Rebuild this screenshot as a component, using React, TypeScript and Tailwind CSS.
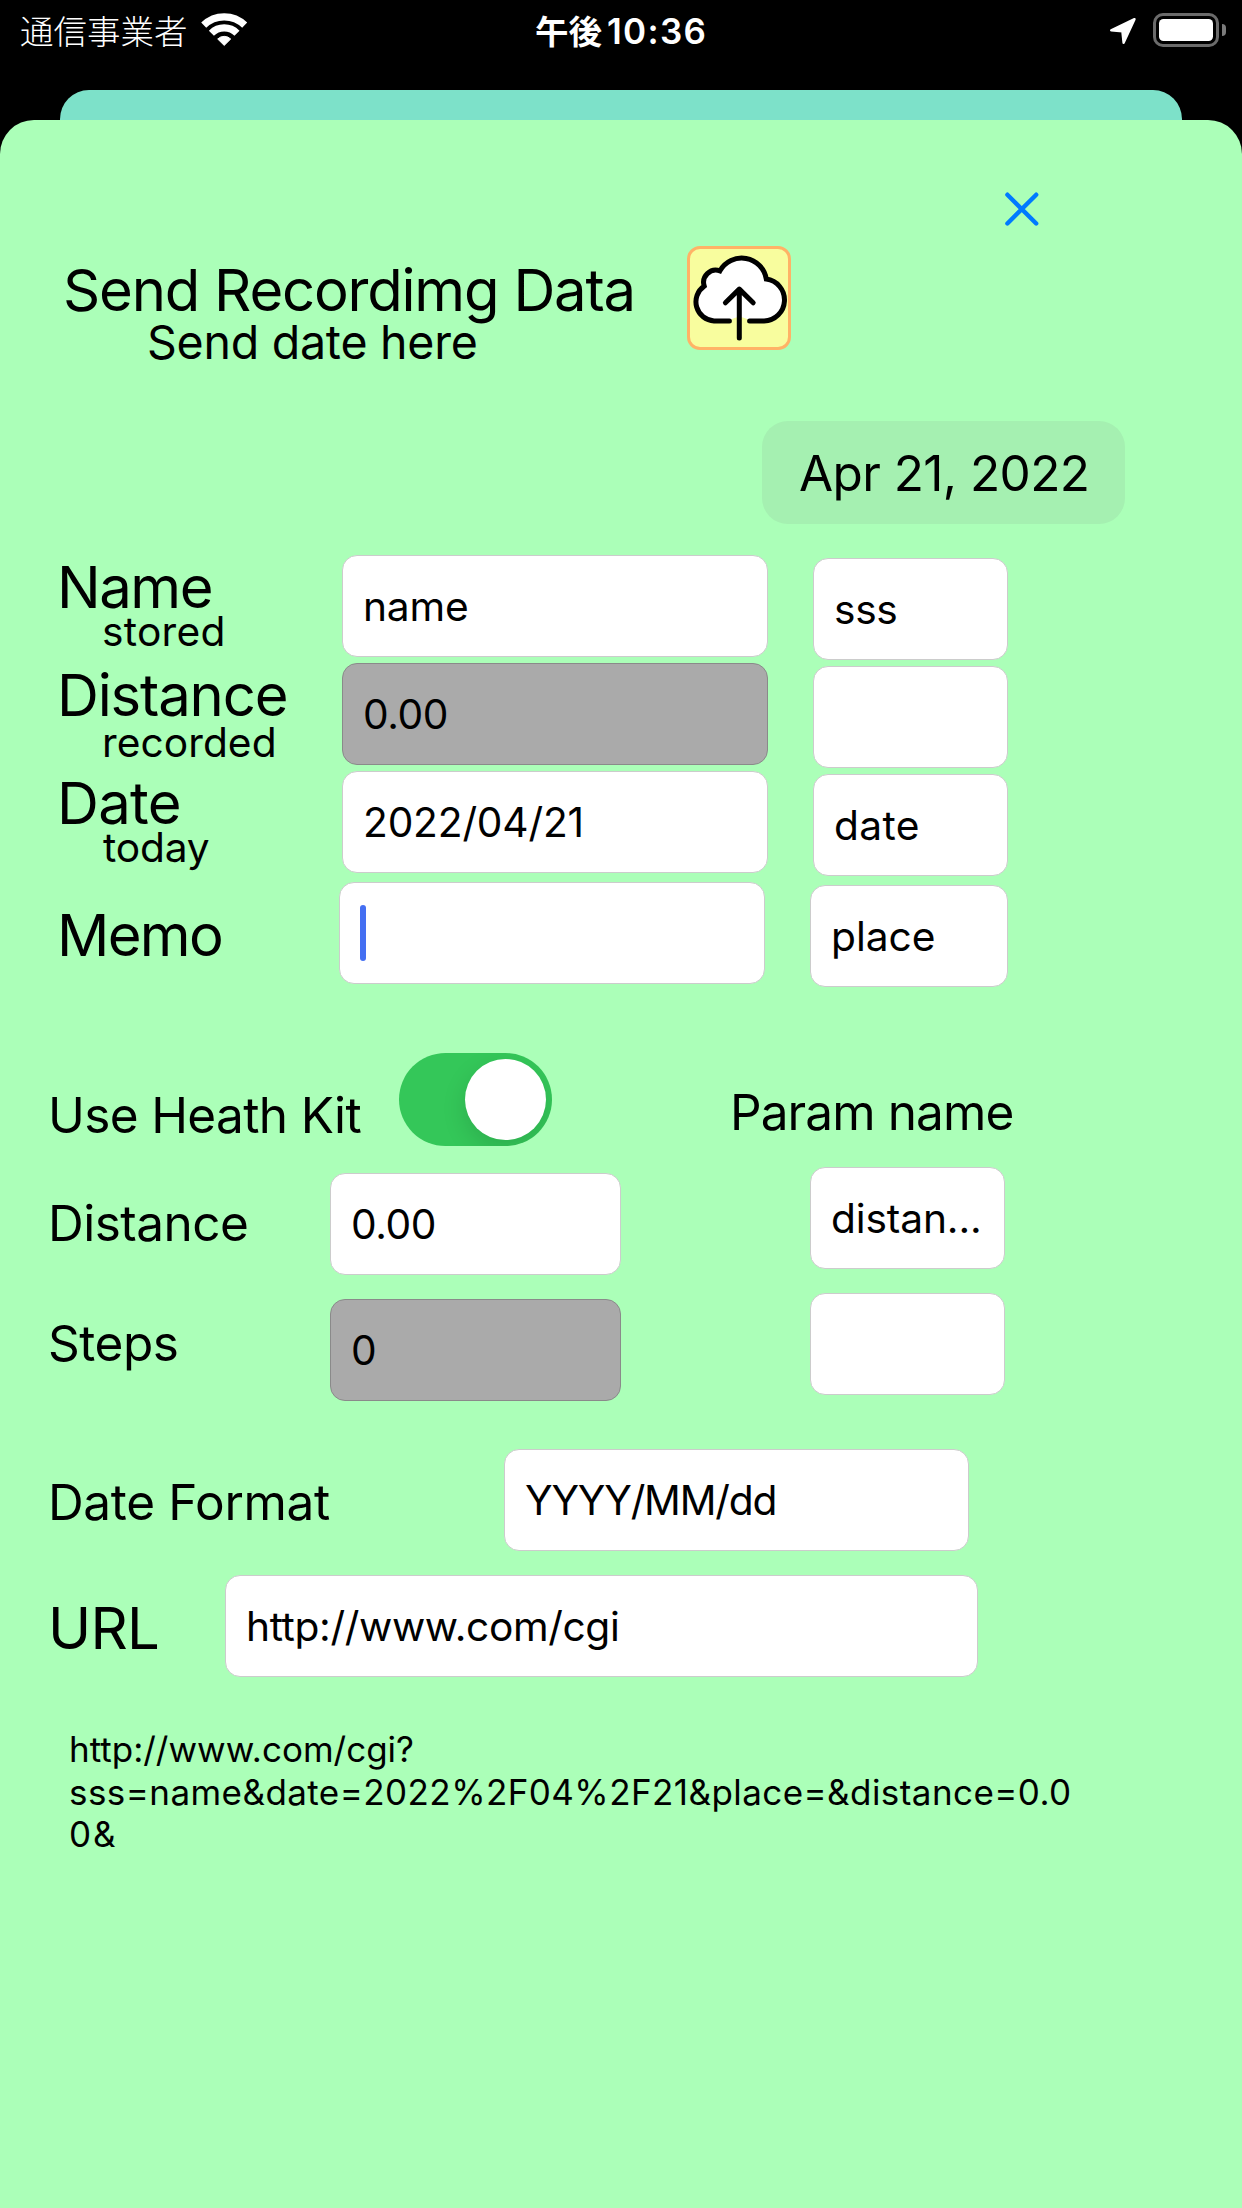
import type { ReactNode } from 'react';

function Field({ children, className = '', muted = false }: { children?: ReactNode; className?: string; muted?: boolean }) {
  return (
    <div
      className={`flex h-[102px] shrink-0 items-center whitespace-pre rounded-[15px] border pl-5 pt-0.5 text-[40.7px] leading-[50px] ${
        muted ? 'border-[#8a8a8a] bg-[#aaaaaa]' : 'border-[#cccccc] bg-white'
      } ${className}`}
    >
      {children}
    </div>
  );
}

function StatusBar() {
  return (
    <header className="flex h-[90px] items-start text-white">
      <div className="ml-5 mt-1.5 w-[181px] whitespace-nowrap font-['Noto_Sans_CJK_JP',sans-serif] text-[33.5px] font-light leading-[48px]">
        通信事業者
      </div>
      <svg className="mt-3 h-[35px] w-[47px]" viewBox="0 0 47 35" fill="none">
        <path d="M2.7 13.2A29.4 29.4 0 0 1 43.7 13.2" stroke="white" strokeWidth="7.2" />
        <path d="M10.4 21.2A18.2 18.2 0 0 1 36 21.2" stroke="white" strokeWidth="7.2" />
        <path d="M23.2 33.4L16.7 27A9.3 9.3 0 0 1 29.7 27Z" fill="white" stroke="white" strokeWidth="1" strokeLinejoin="round" />
      </svg>
      <div className="ml-[287px] flex w-[574px] whitespace-nowrap leading-[48px]">
        <span className="mt-1.5 w-[72px] font-['Noto_Sans_CJK_JP',sans-serif] text-[33.5px] font-bold">午後</span>
        <span className="mt-[7px] font-['Inter',sans-serif] text-[35px] font-semibold tracking-[1.3px]">10:36</span>
      </div>
      <svg className="mt-[17px] h-7 w-7" viewBox="0 0 28 28">
        <path d="M25.5 2.2L2.2 13.3L13.4 14.4L14.6 25.8Z" fill="white" stroke="white" strokeWidth="2.4" strokeLinejoin="round" />
      </svg>
      <div className="ml-4 mt-[13px] flex items-center">
        <div className="h-[34px] w-[66px] rounded-[10px] border-[3px] border-[#6b6b6b] p-[3px]">
          <div className="h-full w-full rounded-[4.5px] bg-white" />
        </div>
        <div className="ml-[3px] h-3 w-1 rounded-r-full bg-[#7b7b7b]" />
      </div>
    </header>
  );
}

function CloudUploadButton() {
  return (
    <button className="-ml-px mt-[19px] h-[104px] w-[104px] rounded-[13px] border-[3px] border-[#ffb366] bg-[#f8fd9e]">
      <svg className="-m-[3px] h-[104px] w-[104px]" viewBox="27.4 16.8 104 104" fill="none" stroke="black" strokeWidth="5" strokeLinecap="round">
        <path
          d="M70 91.5H54.5A19 19 0 0 1 44.6 56.8A12.2 12.2 0 0 1 60.3 41.7A24.9 24.9 0 0 1 106.7 49.9A21 21 0 0 1 104.5 91.5H90Q79.7 84 70 91.5Z"
          fill="white"
          stroke="none"
        />
        <path d="M69.8 91.7H54.5A19.1 19.1 0 0 1 44.6 56.9A12.2 12.2 0 0 1 60.3 41.7A24.9 24.9 0 0 1 106.7 49.9A21 21 0 0 1 104.5 91.7H90" />
        <path d="M79.7 60.3V108.8M65.8 73.6L79.7 59.9L93.6 73.6" strokeLinejoin="round" />
      </svg>
    </button>
  );
}

export default function App() {
  return (
    <div className="h-[2208px] w-[1242px] overflow-hidden bg-black font-['Inter',sans-serif] text-black">
      <StatusBar />
      <div className="mx-[60px] h-[30px] rounded-t-[29px] bg-[#7de1c9]" />
      <main className="h-[2088px] rounded-t-[34px] bg-[#abffb8] pt-[71px]">
        <button className="ml-[1004px] block h-9 w-9">
          <svg className="h-9 w-9" viewBox="0 0 36 36" stroke="#007aff" strokeWidth="4.4" strokeLinecap="round">
            <path d="M3.4 3.7L32.2 32.5M32.2 3.7L3.4 32.5" />
          </svg>
        </button>

        <section className="flex h-[137px] items-start pl-[63px]">
          <div className="w-[625px] whitespace-nowrap pt-[33px]">
            <h1 className="text-[58px] leading-[60px] tracking-[-1.2px]">Send Recordimg Data</h1>
            <p className="pl-[84px] text-[46.5px] leading-[44px] tracking-[-0.24px]">Send date here</p>
          </div>
          <CloudUploadButton />
        </section>

        <button className="ml-[762px] mt-[57px] flex h-[103px] w-[363px] items-center whitespace-nowrap rounded-[26px] bg-[#a5f0b1] pl-[37px] text-[49.5px] leading-[60px] tracking-[-0.58px]">
          Apr 21, 2022
        </button>

        <section className="mt-[31px] flex items-start whitespace-nowrap pl-[57px]">
          <div className="w-[285px] pt-[7px]">
            <h2 className="text-[58px] leading-[50px] tracking-[-1.46px]">Name</h2>
            <p className="pl-[45px] text-[40.7px] leading-[40px] tracking-[0.25px]">stored</p>
            <h2 className="mt-[18px] text-[58px] leading-[50px] tracking-[-1.15px]">Distance</h2>
            <p className="mt-[3px] pl-[45px] text-[40.7px] leading-[40px] tracking-[0.05px]">recorded</p>
            <h2 className="mt-[15px] text-[58px] leading-[50px] tracking-[-0.71px]">Date</h2>
            <p className="pl-[46px] text-[40.7px] leading-[40px] tracking-[-0.15px]">today</p>
            <h2 className="mt-[42px] text-[58px] leading-[50px] tracking-[-1.67px]">Memo</h2>
          </div>
          <div className="flex w-[471px] flex-col gap-1.5">
            <Field className="w-[426px] tracking-[-0.18px]">name</Field>
            <Field className="w-[426px] tracking-[-0.4px]" muted>0.00</Field>
            <Field className="w-[426px] tracking-[-0.18px]">2022/04/21</Field>
            <Field className="-ml-[3px] mt-[3px] w-[426px]">
              <span className="mb-0.5 h-14 w-1.5 rounded-full bg-[#446ff2]" />
            </Field>
          </div>
          <div className="flex flex-col gap-1.5 pt-[3px]">
            <Field className="w-[195px] tracking-[-0.3px]">sss</Field>
            <Field className="w-[195px]" />
            <Field className="w-[195px] tracking-[0.4px]">date</Field>
            <Field className="-ml-[3px] mt-[3px] w-[198px]">place</Field>
          </div>
        </section>

        <section className="mt-[66px] whitespace-nowrap pl-12 text-[49.5px] leading-[60px]">
          <div className="flex h-[93px] items-start">
            <h3 className="mt-8 w-[351px] tracking-[-0.64px]">Use Heath Kit</h3>
            <div className="flex h-[93px] w-[153px] items-center justify-end overflow-hidden rounded-full bg-[#34c759] pr-1.5">
              <div className="h-[81px] w-[81px] rounded-full bg-white shadow-[0_9px_24px_rgba(0,0,0,0.13)]" />
            </div>
            <h3 className="ml-[178px] mt-[29px] tracking-[-0.9px]">Param name</h3>
          </div>
          <div className="mt-[21px] flex items-start">
            <h3 className="mt-[26px] w-[282px] tracking-[-0.5px]">Distance</h3>
            <Field className="mt-1.5 w-[291px] tracking-[-0.4px]">0.00</Field>
            <Field className="ml-[189px] w-[195px] tracking-[-0.14px]">distan...</Field>
          </div>
          <div className="mt-[18px] flex items-start">
            <h3 className="mt-5 w-[282px] tracking-[-0.45px]">Steps</h3>
            <Field className="mt-1.5 w-[291px]" muted>0</Field>
            <Field className="ml-[189px] w-[195px]" />
          </div>
          <div className="mt-12 flex items-start">
            <h3 className="mt-[23px] w-[456px] tracking-[-0.36px]">Date Format</h3>
            <Field className="w-[465px] tracking-[-1.2px]">YYYY/MM/dd</Field>
          </div>
          <div className="mt-6 flex items-start">
            <h2 className="mt-[23px] w-[177px] text-[58px] tracking-[-0.74px]">URL</h2>
            <Field className="w-[753px] tracking-[-0.38px]">http://www.com/cgi</Field>
          </div>
        </section>

        <p className="ml-[69px] mt-[51px] w-[1010px] whitespace-nowrap text-[35px] leading-[42.6px]">
          <span className="block">http://www.com/cgi?</span>
          <span className="block tracking-[0.43px]">sss=name&amp;date=2022%2F04%2F21&amp;place=&amp;distance=0.0</span>
          <span className="block tracking-[1.8px]">0&amp;</span>
        </p>
      </main>
    </div>
  );
}
